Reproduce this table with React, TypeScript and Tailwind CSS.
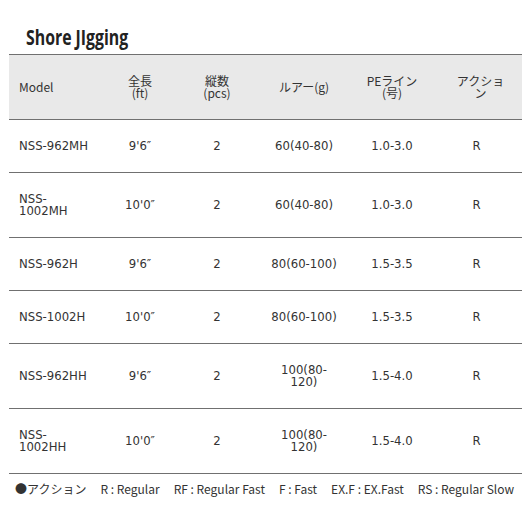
import React from "react";

const rows: { model: React.ReactNode; len: string; pcs: string; lure: React.ReactNode; pe: string; act: string }[] = [
  { model: "NSS-962MH", len: "9'6″", pcs: "2", lure: "60(40-80)", pe: "1.0-3.0", act: "R" },
  { model: <>NSS-<br />1002MH</>, len: "10'0″", pcs: "2", lure: "60(40-80)", pe: "1.0-3.0", act: "R" },
  { model: "NSS-962H", len: "9'6″", pcs: "2", lure: "80(60-100)", pe: "1.5-3.5", act: "R" },
  { model: "NSS-1002H", len: "10'0″", pcs: "2", lure: "80(60-100)", pe: "1.5-3.5", act: "R" },
  { model: "NSS-962HH", len: "9'6″", pcs: "2", lure: <>100(80-<br />120)</>, pe: "1.5-4.0", act: "R" },
  { model: <>NSS-<br />1002HH</>, len: "10'0″", pcs: "2", lure: <>100(80-<br />120)</>, pe: "1.5-4.0", act: "R" },
];

const grid = "grid grid-cols-[92px_78px_76px_98px_78px_91px] items-center border-b border-[#707070]";

export default function App() {
  return (
    <div className="w-[523px] h-[523px] bg-white overflow-hidden">
      <div className="pl-[26px] pt-[25px] h-[54px]">
        <span
          className="inline-block origin-left scale-x-[0.72] text-[22px] leading-[22px] font-bold text-[#222] whitespace-nowrap"
          style={{ fontFamily: '"Open Sans", sans-serif' }}
        >
          Shore JIgging
        </span>
      </div>
      <div className="ml-[9px] w-[513px] border-t border-[#707070]">
        <div
          className={`${grid} bg-[#e9e9e9] h-[65px] text-[12px] leading-[12px] text-[#333]`}
          style={{ fontFamily: '"Noto Sans CJK JP", sans-serif' }}
        >
          <div className="pl-[10px]">Model</div>
          <div className="text-center">全長<br />(ft)</div>
          <div className="text-center">縦数<br />(pcs)</div>
          <div className="text-center">ルアー(g)</div>
          <div className="text-center">PEライン<br />(号)</div>
          <div className="text-center pl-[8px]">アクショ<br />ン</div>
        </div>
        {rows.map((r, i) => {
          const tall = typeof r.model !== "string" || typeof r.lure !== "string";
          return (
            <div
              key={i}
              className={`${grid} ${tall ? "h-[65px]" : "h-[53px]"} text-[11.7px] leading-[12px] text-[#333]`}
              style={{ fontFamily: '"DejaVu Sans", Verdana, sans-serif' }}
            >
              <div className="pl-[10px]">{r.model}</div>
              <div className="text-center">{r.len}</div>
              <div className="text-center">{r.pcs}</div>
              <div className="text-center">{r.lure}</div>
              <div className="text-center">{r.pe}</div>
              <div className="text-center">{r.act}</div>
            </div>
          );
        })}
        <div
          className="pl-[6px] pt-[8px] text-[12px] leading-[14px] text-[#333] whitespace-nowrap flex gap-[14px]"
          style={{ fontFamily: '"Noto Sans CJK JP", sans-serif' }}
        >
          <span>●アクション</span>
          <span>R : Regular</span>
          <span>RF : Regular Fast</span>
          <span>F : Fast</span>
          <span>EX.F : EX.Fast</span>
          <span>RS : Regular Slow</span>
        </div>
      </div>
    </div>
  );
}
